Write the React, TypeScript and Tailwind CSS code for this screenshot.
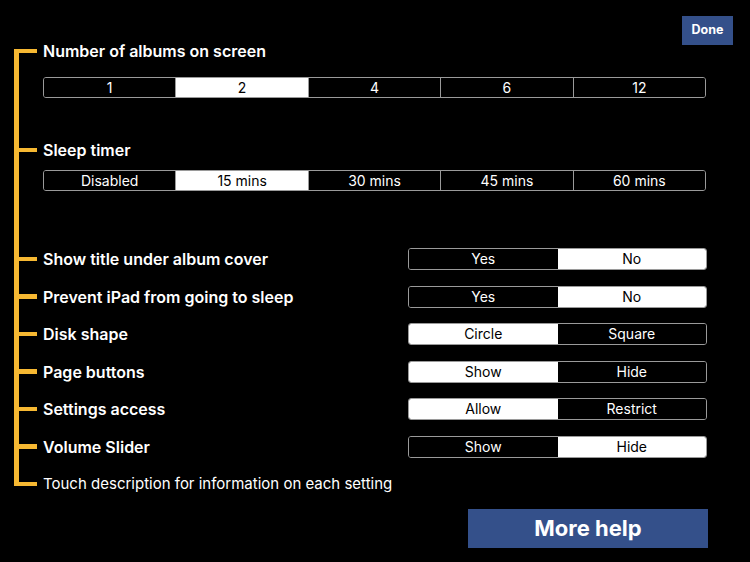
import React from "react";

const Y = "bg-[#f6b832]";

function Segmented({ items, active }: { items: string[]; active: number }) {
  return (
    <div className="flex h-[21px] w-[663px] overflow-hidden rounded-[3px] border border-[#9a9a9a]">
      {items.map((t, i) => (
        <div
          key={t}
          className={
            "flex flex-1 items-center justify-center text-[14px] leading-none " +
            (i > 0 ? "border-l border-[#9a9a9a] " : "") +
            (i === active ? "bg-white text-black" : "bg-black text-white")
          }
        >
          {t}
        </div>
      ))}
    </div>
  );
}

function Toggle({ a, b, active }: { a: string; b: string; active: number }) {
  return (
    <div className="flex h-[22px] w-[299px] overflow-hidden rounded-[3px] border border-[#9a9a9a]">
      {[a, b].map((t, i) => (
        <div
          key={t}
          className={
            "flex flex-1 items-center justify-center text-[14px] leading-none " +
            (i === active ? "bg-white text-black" : "bg-black text-white")
          }
        >
          {t}
        </div>
      ))}
    </div>
  );
}

function Tick() {
  return <div className={"ml-[14px] mr-[6px] h-[4.5px] w-[23px] shrink-0 " + Y} />;
}

const rows: { label: string; a: string; b: string; active: number }[] = [
  { label: "Show title under album cover", a: "Yes", b: "No", active: 1 },
  { label: "Prevent iPad from going to sleep", a: "Yes", b: "No", active: 1 },
  { label: "Disk shape", a: "Circle", b: "Square", active: 0 },
  { label: "Page buttons", a: "Show", b: "Hide", active: 0 },
  { label: "Settings access", a: "Allow", b: "Restrict", active: 0 },
  { label: "Volume Slider", a: "Show", b: "Hide", active: 1 },
];

export default function App() {
  return (
    <div
      className="flex h-[562px] w-[750px] flex-col overflow-hidden bg-black text-white"
      style={{ fontFamily: "Inter, 'Liberation Sans', sans-serif" }}
    >
      <div className="flex h-[45px] shrink-0 justify-end pr-[17px] pt-[16px]">
        <button className="flex h-[29px] w-[51px] items-center justify-center bg-[#34508a] text-[12.5px] font-bold text-white">
          Done
        </button>
      </div>
      <div className="mt-[-4px] flex">
        <div className={"ml-[14px] mt-[8px] mb-[9px] w-[4.5px] shrink-0 " + Y} />
        <div className="ml-[-18.5px] flex flex-col">
          <div className="flex h-[20px] items-center">
            <Tick />
            <span className="text-[16px] font-semibold">Number of albums on screen</span>
          </div>
          <div className="ml-[43px] mt-[16px]">
            <Segmented items={["1", "2", "4", "6", "12"]} active={1} />
          </div>
          <div className="mt-[42px] flex h-[20px] items-center">
            <Tick />
            <span className="text-[16px] font-semibold">Sleep timer</span>
          </div>
          <div className="ml-[43px] mt-[10px]">
            <Segmented items={["Disabled", "15 mins", "30 mins", "45 mins", "60 mins"]} active={1} />
          </div>
          <div className="mt-[57px] flex flex-col gap-[15.5px]">
            {rows.map((r) => (
              <div key={r.label} className="flex h-[22px] w-[707px] items-center">
                <Tick />
                <span className="flex-1 text-[16px] font-semibold">{r.label}</span>
                <Toggle a={r.a} b={r.b} active={r.active} />
              </div>
            ))}
            <div className="flex h-[22px] items-center">
              <Tick />
              <span className="text-[15px]">Touch description for information on each setting</span>
            </div>
          </div>
        </div>
      </div>
      <div className="mt-[14px] flex w-[708px] justify-end">
        <button className="flex h-[39px] w-[240px] items-center justify-center bg-[#34508a] text-[22px] font-bold text-white">
          More help
        </button>
      </div>
    </div>
  );
}
